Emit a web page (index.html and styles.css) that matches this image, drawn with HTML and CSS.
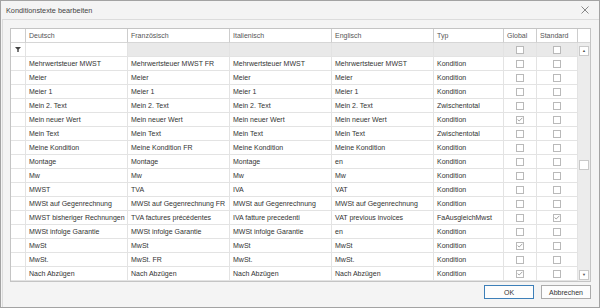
FILE: index.html
```html
<!DOCTYPE html>
<html lang="de">
<head>
    <meta charset="UTF-8">
    <title>Konditionstexte bearbeiten</title>
    <link rel="stylesheet" href="styles.css">
</head>
<body>
    <div class="window">
        <div class="titlebar">
            <span class="title">Konditionstexte bearbeiten</span>
            <svg class="close" width="8" height="8" viewBox="0 0 8 8"><path d="M0.5 0.5 L7.5 7.5 M7.5 0.5 L0.5 7.5" stroke="#7a7a7a" stroke-width="0.9"/></svg>
        </div>

        <div class="content">
            <div class="grid">
                <div class="row header">
                    <div class="cell ind"></div>
                    <div class="cell">Deutsch</div>
                    <div class="cell">Französisch</div>
                    <div class="cell">Italienisch</div>
                    <div class="cell">Englisch</div>
                    <div class="cell">Typ</div>
                    <div class="cell">Global</div>
                    <div class="cell">Standard</div>
                    <div class="cell scroll-head"></div>
                </div>

                <div class="body">
                    <div class="rows" id="rows">
                        <div class="row filter">
                            <div class="cell ind">
                                <svg width="6" height="5" viewBox="0 0 6 5"><path d="M0 0 H6 L3.7 2.4 V5 H2.3 V2.4 Z" fill="#444"/></svg>
                            </div>
                            <div class="cell active"></div>
                            <div class="cell"></div>
                            <div class="cell"></div>
                            <div class="cell"></div>
                            <div class="cell"></div>
                            <div class="cell check"><span class="box"></span></div>
                            <div class="cell check"><span class="box"></span></div>
                        </div>
                    </div>
                    <div class="scrollbar">
                        <div class="sb-btn">&#9650;</div>
                        <div class="sb-thumb"></div>
                        <div class="sb-btn down">&#9660;</div>
                    </div>
                </div>
            </div>

            <div class="buttons">
                <button class="btn primary">OK</button>
                <button class="btn">Abbrechen</button>
            </div>
        </div>
    </div>

    <script>
        const data = [
            ['Mehrwertsteuer MWST', 'Mehrwertsteuer MWST FR', 'Mehrwertsteuer MWST', 'Mehrwertsteuer MWST', 'Kondition', false, false],
            ['Meier', 'Meier', 'Meier', 'Meier', 'Kondition', false, false],
            ['Meier 1', 'Meier 1', 'Meier 1', 'Meier 1', 'Kondition', false, false],
            ['Mein 2. Text', 'Mein 2. Text', 'Mein 2. Text', 'Mein 2. Text', 'Zwischentotal', false, false],
            ['Mein neuer Wert', 'Mein neuer Wert', 'Mein neuer Wert', 'Mein neuer Wert', 'Kondition', true, false],
            ['Mein Text', 'Mein Text', 'Mein Text', 'Mein Text', 'Zwischentotal', false, false],
            ['Meine Kondition', 'Meine Kondition FR', 'Meine Kondition', 'Meine Kondition', 'Kondition', false, false],
            ['Montage', 'Montage', 'Montage', 'en', 'Kondition', false, false],
            ['Mw', 'Mw', 'Mw', 'Mw', 'Kondition', false, false],
            ['MWST', 'TVA', 'IVA', 'VAT', 'Kondition', false, false],
            ['MWSt auf Gegenrechnung', 'MWSt auf Gegenrechnung FR', 'MWSt auf Gegenrechnung', 'MWSt auf Gegenrechnung', 'Kondition', false, false],
            ['MWST bisheriger Rechnungen', 'TVA factures précédentes', 'IVA fatture precedenti', 'VAT previous invoices', 'FaAusgleichMwst', false, true],
            ['MWSt infolge Garantie', 'MWSt infolge Garantie', 'MWSt infolge Garantie', 'en', 'Kondition', false, false],
            ['MwSt', 'MwSt', 'MwSt', 'MwSt', 'Kondition', true, false],
            ['MwSt.', 'MwSt. FR', 'MwSt.', 'MwSt.', 'Kondition', false, false],
            ['Nach Abzügen', 'Nach Abzügen', 'Nach Abzügen', 'Nach Abzügen', 'Kondition', true, false]
        ];

        const tick = '<svg width="6" height="5" viewBox="0 0 6 5"><path d="M0.6 2.6 L2.2 4 L5.4 0.8" fill="none" stroke="#8a8a8a" stroke-width="0.8"/></svg>';
        const rows = document.getElementById('rows');

        data.forEach(item => {
            const row = document.createElement('div');
            row.className = 'row';
            let html = '<div class="cell ind"></div>';
            for (let i = 0; i < 5; i++) {
                html += `<div class="cell">${item[i]}</div>`;
            }
            html += `<div class="cell check"><span class="box">${item[5] ? tick : ''}</span></div>`;
            html += `<div class="cell check"><span class="box">${item[6] ? tick : ''}</span></div>`;
            row.innerHTML = html;
            rows.appendChild(row);
        });
    </script>
</body>
</html>
```

FILE: styles.css
```css
body {
    margin: 0;
    font-family: "Liberation Sans", Arial, sans-serif;
    font-size: 7px;
    color: #333;
}

.window {
    width: 600px;
    height: 308px;
    box-sizing: border-box;
    border: 1px solid #a3a3a3;
    background-color: #f4f4f4;
    display: flex;
    flex-direction: column;
}

.titlebar {
    height: 18px;
    display: flex;
    align-items: center;
    justify-content: space-between;
    padding: 0 10px 0 5px;
    font-size: 7.3px;
    color: #444;
}

.close {
    display: block;
}

.content {
    flex: 1;
    margin-left: 1px;
    border-top: 1px solid #dcdcdc;
    border-left: 1px solid #dcdcdc;
    padding: 8px 0 0 7px;
}

.grid {
    width: 581px;
    box-sizing: border-box;
    border: 1px solid #c4c4c4;
    background-color: #fff;
}

.row {
    display: grid;
    grid-template-columns: 15px 102px 102px 102px 102px 70px 33px 41px;
    height: 14px;
}

.header {
    grid-template-columns: 15px 102px 102px 102px 102px 70px 33px 41px 12px;
    color: #555;
}

.cell {
    box-sizing: border-box;
    border-right: 1px solid #e3e3e3;
    border-bottom: 1px solid #e3e3e3;
    padding-left: 3px;
    line-height: 13px;
    white-space: nowrap;
    overflow: hidden;
}

.header .cell {
    border-right-color: #cdcdcd;
    border-bottom-color: #d6d6d6;
}

.header .scroll-head {
    border-right: none;
}

.ind {
    padding-left: 0;
    display: flex;
    align-items: center;
    justify-content: center;
}

.filter .cell {
    background-color: #e9e9e9;
}

.filter .ind,
.filter .active {
    background-color: #fff;
}

.check {
    padding-left: 0;
    display: flex;
    align-items: center;
    justify-content: center;
}

.box {
    width: 8px;
    height: 8px;
    box-sizing: border-box;
    border: 1px solid #b9b9b9;
    background-color: #fff;
    display: flex;
    align-items: center;
    justify-content: center;
}

.body {
    display: flex;
    height: 238px;
}

.rows {
    width: 567px;
}

.scrollbar {
    width: 12px;
    background-color: #ececec;
    display: flex;
    flex-direction: column;
    align-items: center;
    padding: 3px 0 1px;
    box-sizing: border-box;
}

.sb-btn,
.sb-thumb {
    width: 10px;
    height: 10px;
    box-sizing: border-box;
    border: 1px solid #c9c9c9;
    background-color: #fff;
}

.sb-btn {
    font-size: 4px;
    line-height: 8px;
    text-align: center;
    color: #555;
}

.sb-thumb {
    margin-top: 104px;
}

.sb-btn.down {
    margin-top: auto;
}

.buttons {
    display: flex;
    justify-content: flex-end;
    gap: 7px;
    margin-top: 3px;
    padding-right: 8px;
}

.btn {
    width: 50px;
    height: 14px;
    padding: 0;
    font-family: inherit;
    font-size: 7px;
    color: #333;
    background-color: #fdfdfd;
    border: 1px solid #ababab;
    border-radius: 0;
}

.btn.primary {
    border-color: #3d7fb8;
}
```
